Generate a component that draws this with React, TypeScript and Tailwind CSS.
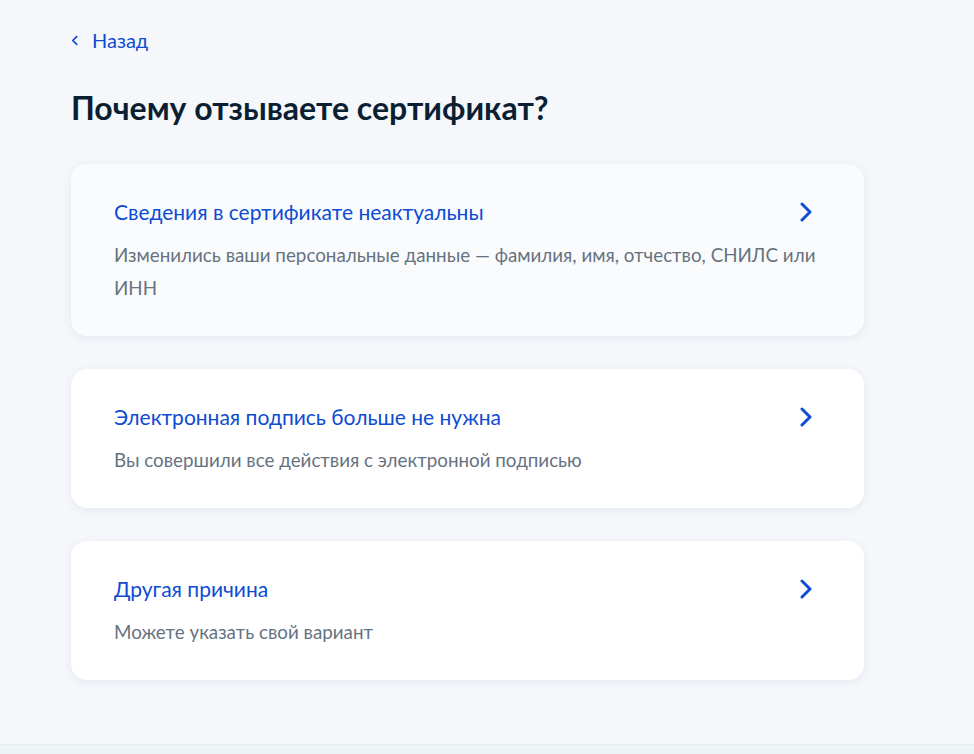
import React from "react"

const reasons = [
  {
    title: "Сведения в сертификате неактуальны",
    text: "Изменились ваши персональные данные — фамилия, имя, отчество, СНИЛС или ИНН",
    hover: true,
  },
  {
    title: "Электронная подпись больше не нужна",
    text: "Вы совершили все действия с электронной подписью",
  },
  {
    title: "Другая причина",
    text: "Можете указать свой вариант",
  },
]

function Chevron({ className }: { className?: string }) {
  return (
    <svg viewBox="0 0 12 20" className={className} fill="none">
      <path d="M2 2l8 8-8 8" stroke="currentColor" strokeWidth="3" strokeLinecap="round" strokeLinejoin="round" />
    </svg>
  )
}

export default function App() {
  return (
    <div
      className="min-h-[754px] bg-[#f5f7fb] flex flex-col"
      style={{ fontFamily: "Lato, 'Noto Sans', sans-serif" }}
    >
      <div className="flex-1 pl-[71px] pr-[110px] pt-[28px]">
        {/* Back link */}
        <a href="#" className="flex items-center gap-[14px] text-[#0d4cd3] text-[20px] leading-6">
          <svg viewBox="0 0 8 12" className="w-[7px] h-[11px]" fill="none">
            <path d="M6.5 1.5L2 6l4.5 4.5" stroke="currentColor" strokeWidth="2" strokeLinecap="round" strokeLinejoin="round" />
          </svg>
          Назад
        </a>

        <h1 className="mt-[38px] text-[32px] leading-9 font-bold text-[#0b1f33]">Почему отзываете сертификат?</h1>

        {/* Reason cards */}
        <div className="mt-[38px] flex flex-col gap-[33px] w-[793px]">
          {reasons.map((r) => (
            <button
              key={r.title}
              className={
                "text-left rounded-[16px] pl-[43px] pr-[36px] pt-[36px] pb-[32px] shadow-[0_2px_10px_rgba(30,60,120,0.08)] " +
                (r.hover ? "bg-[#fafbfd]" : "bg-white")
              }
            >
              <div className="flex items-start justify-between gap-6">
                <div className="text-[21px] leading-6 text-[#0d4cd3]">{r.title}</div>
                <Chevron className="w-[12px] h-[20px] mt-[2px] mr-[16px] text-[#0d4cd3] shrink-0" />
              </div>
              <p className="mt-[14px] text-[18.8px] leading-[33px] text-[#66727f]">{r.text}</p>
            </button>
          ))}
        </div>
      </div>
      <div className="h-[10px] bg-[#eef4f6] border-t border-[#e6eef2]" />
    </div>
  )
}
